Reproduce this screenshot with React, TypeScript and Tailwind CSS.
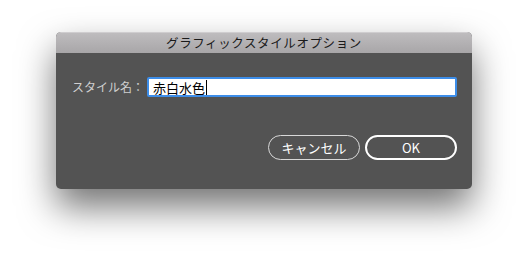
const jp = { fontFamily: '"Noto Sans CJK JP", "Liberation Sans", sans-serif' }

export default function App() {
  return (
    <div className="w-[528px] h-[270px] bg-white overflow-hidden pt-[32px]" style={jp}>
      <div className="mx-auto w-[416px] h-[157px] rounded-[5px] bg-[#535353] shadow-[0_18px_36px_rgba(0,0,0,0.55)] overflow-hidden flex flex-col">
        {/* Title bar */}
        <div className="h-[21px] shrink-0 flex items-center justify-center bg-gradient-to-b from-[#bebcbe] to-[#a8a6a8] border-t border-[#cfcdcf] text-[12.5px] text-[#1a1a1a] tracking-[0.6px] leading-none">
          グラフィックスタイルオプション
        </div>

        {/* Body */}
        <div className="flex-1 flex flex-col pl-[16px] pr-[15px] pt-[24px]">
          <div className="flex items-center h-[20px]">
            <span className="shrink-0 w-[75px] whitespace-nowrap text-[12px] text-[#cfcfcf] leading-none">スタイル名：</span>
            <div className="flex-1 h-[20px] bg-white border-2 border-[#3d8de8] rounded-[2px] flex items-center pl-[4px]">
              <span className="text-[13px] text-black leading-none">赤白水色</span>
              <span className="w-px h-[15px] bg-black ml-px" />
            </div>
          </div>

          <div className="flex justify-end gap-[5px] mt-[38px]">
            <button className="w-[92px] h-[25px] rounded-full border border-[#d8d8d8] text-white text-[13px] leading-none flex items-center justify-center">
              キャンセル
            </button>
            <button className="w-[92px] h-[25px] rounded-full border-2 border-white text-white text-[13px] leading-none flex items-center justify-center">
              OK
            </button>
          </div>
        </div>
      </div>
    </div>
  )
}
